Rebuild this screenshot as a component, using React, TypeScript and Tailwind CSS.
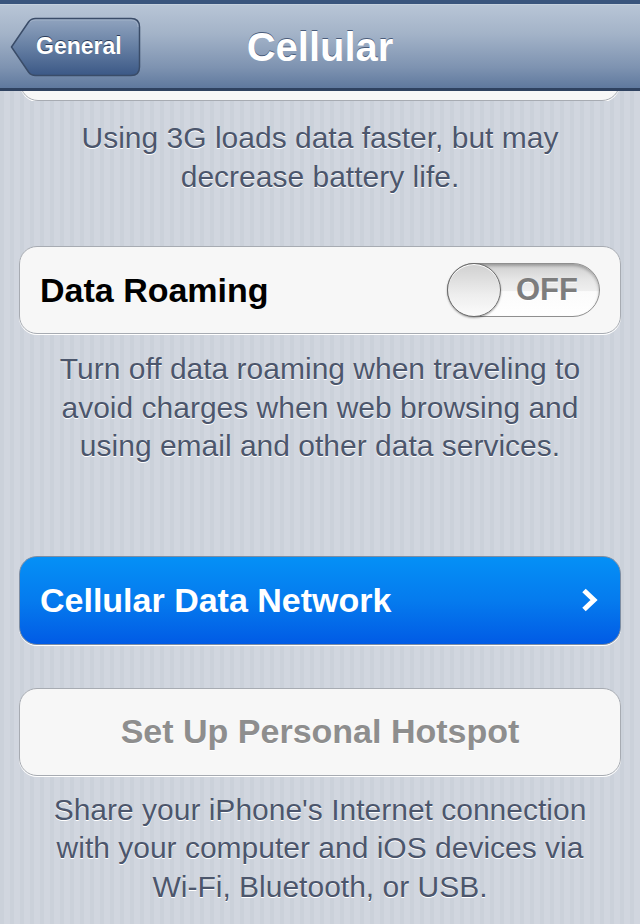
import React from "react";

const footer =
  "text-[30px] leading-[38.5px] text-center text-[#4c566c] whitespace-nowrap [text-shadow:0_1px_0_#ffffff]";

const card =
  "rounded-[18px] border border-[#a7abb2] bg-[#f7f7f7] shadow-[0_1px_0_#ffffff]";

export default function App() {
  return (
    <div className="w-[640px] h-[924px] overflow-hidden bg-[repeating-linear-gradient(90deg,#cbd1da_0px,#cbd1da_4px,#d1d6df_4px,#d1d6df_10px)] font-['Liberation_Sans',Arial,sans-serif]">
      {/* top dark strip */}
      <div className="h-[4px] bg-[#3a557d]" />
      {/* nav bar */}
      <div className="relative h-[87px] border-t border-[#c6d1de] border-b-[3px] border-b-[#2f4260] bg-[linear-gradient(to_bottom,#b8c5d6_0%,#a3b3c8_35%,#7e93b1_75%,#5f799e_100%)] flex items-center">
        <div className="relative ml-[10px] h-[60px] w-[131px] flex items-center">
          <svg
            className="absolute inset-0"
            width="131"
            height="60"
            viewBox="0 0 131 60"
          >
            <defs>
              <linearGradient id="bb" x1="0" y1="0" x2="0" y2="1">
                <stop offset="0" stopColor="#91a4bf" />
                <stop offset="0.5" stopColor="#667fa3" />
                <stop offset="1" stopColor="#3b5886" />
              </linearGradient>
            </defs>
            <path
              d="M1.5 30 L18.5 5 Q21 1.5 25.5 1.5 H121 Q129.5 1.5 129.5 10 V50 Q129.5 58.5 121 58.5 H25.5 Q21 58.5 18.5 55 Z"
              fill="url(#bb)"
              stroke="#3a4c68"
              strokeWidth="1.5"
            />
            <path
              d="M20 5 Q22 3 26 3 H121 Q128 3 128 10"
              fill="none"
              stroke="#a9b8cc"
              strokeWidth="1"
              opacity="0.7"
            />
          </svg>
          <span className="relative pl-[26px] text-[23px] font-bold text-white [text-shadow:0_-1px_0_#2a3b58]">
            General
          </span>
        </div>
        <div className="absolute inset-0 flex items-center justify-center pointer-events-none">
          <span className="text-[40px] font-bold text-white [text-shadow:0_-1px_0_#4a5c7a]">
            Cellular
          </span>
        </div>
      </div>

      <div className="px-[19px]">
        {/* peeking card */}
        <div className="h-[10px] overflow-hidden">
          <div className={`${card} h-[88px] -mt-[78px] mx-[1px]`} />
        </div>
        <div className={`${footer} mt-[18px]`}>
          Using 3G loads data faster, but may
          <br />
          decrease battery life.
        </div>

        {/* Data Roaming */}
        <div
          className={`${card} mt-[50px] h-[88px] flex items-center justify-between pl-[20px] pr-[20px]`}
        >
          <span className="text-[34px] font-bold text-black">Data Roaming</span>
          <div className="relative w-[153px] h-[54px] rounded-full border border-[#8f8f8f] bg-[linear-gradient(to_bottom,#cfcfcf_0%,#e6e6e6_30%,#efefef_52%,#fbfbfb_53%,#ffffff_100%)] shadow-[inset_0_2px_3px_rgba(0,0,0,0.25)] flex items-center">
            <div className="w-[54px] h-[54px] -ml-[1px] rounded-full border border-[#6a6a6a] bg-[linear-gradient(to_bottom,#d0d0d0,#eeeeee_60%,#fbfbfb)] shadow-[0_1px_2px_rgba(0,0,0,0.35),inset_0_1px_0_#ffffff]" />
            <span className="flex-1 text-center pr-[6px] text-[31px] font-bold text-[#7d7d7d] [text-shadow:0_1px_0_#ffffff]">
              OFF
            </span>
          </div>
        </div>
        <div className={`${footer} mt-[16px]`}>
          Turn off data roaming when traveling to
          <br />
          avoid charges when web browsing and
          <br />
          using email and other data services.
        </div>

        {/* Cellular Data Network */}
        <div className="mt-[90px] h-[89px] rounded-[18px] border border-[#7d8da3] bg-[linear-gradient(to_bottom,#0590f6_0%,#057bee_50%,#015be5_100%)] shadow-[0_1px_0_#ffffff] flex items-center justify-between pl-[20px] pr-[21px]">
          <span className="text-[34px] font-bold text-white">
            Cellular Data Network
          </span>
          <svg width="18" height="26" viewBox="0 0 18 26">
            <path
              d="M3 3.5 L13 13 L3 22.5"
              fill="none"
              stroke="#ffffff"
              strokeWidth="5"
              strokeLinejoin="miter"
            />
          </svg>
        </div>

        {/* Personal Hotspot */}
        <div
          className={`${card} mt-[43px] h-[88px] flex items-center justify-center`}
        >
          <span className="text-[34px] font-bold text-[#8e8e8e] [text-shadow:0_1px_0_#ffffff]">
            Set Up Personal Hotspot
          </span>
        </div>
        <div className={`${footer} mt-[15px]`}>
          Share your iPhone's Internet connection
          <br />
          with your computer and iOS devices via
          <br />
          Wi-Fi, Bluetooth, or USB.
        </div>
      </div>
    </div>
  );
}
